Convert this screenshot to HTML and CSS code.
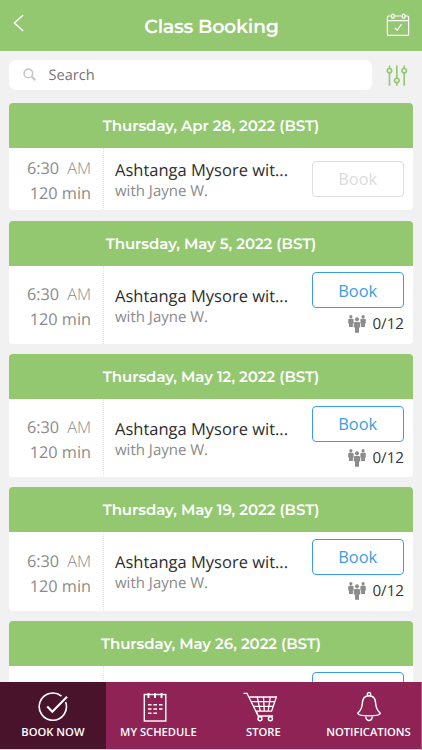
FILE: index.html
```html
<!DOCTYPE html>
<html lang="en">
<head>
<meta charset="utf-8">
<title>Class Booking</title>
<link rel="stylesheet" href="styles.css">
</head>
<body>
<svg class="defs" width="0" height="0" aria-hidden="true">
  <symbol id="people" viewBox="0 0 18 18">
    <g fill="#8c8c8c">
      <circle cx="2.9" cy="1.7" r="1.6"/><path d="M.2 4.2Q2.9 2.8 5.6 4.2V8.4H4.9V12H1V8.4H.2Z"/>
      <circle cx="15.1" cy="1.7" r="1.6"/><path d="M12.4 4.2Q15.1 2.8 17.8 4.2V8.4H17V12H13.1V8.4H12.4Z"/>
      <circle cx="9" cy="4.3" r="2"/><path d="M5.8 7.6Q9 5.8 12.2 7.6V12.4H11V17.7H7V12.4H5.8Z"/>
    </g>
  </symbol>
</svg>
<div class="app">
  <header class="topbar">
    <svg class="back" width="12" height="18" viewBox="0 0 12 18"><path d="M10.2 1L1.4 9L10.2 17"/></svg>
    <h1>Class Booking</h1>
    <svg class="cal" width="24" height="24" viewBox="0 0 24 24"><rect x="1.4" y="3" width="21.2" height="19.4" rx="1"/><path d="M1.4 7.7H22.6M8.6 14.7L11.3 17.2L15.5 11.2"/><rect class="ring" x="5.6" y="1.2" width="2.6" height="4" rx="1.3"/><rect class="ring" x="16.4" y="1.2" width="2.6" height="4" rx="1.3"/></svg>
  </header>
  <div class="searchrow">
    <div class="search">
      <svg width="14" height="14" viewBox="0 0 14 14"><circle cx="5.4" cy="5.4" r="4.3"/><path d="M8.8 8.8L12.3 12.2" stroke-width="2.2"/></svg>
      <span>Search</span>
    </div>
    <svg class="filter" width="22" height="22" viewBox="0 0 22 22"><path d="M3.5.5V3.4M3.5 8V20.8M10.8.5V13M10.8 17.8V20.8M18.2.5V3.4M18.2 8V20.8"/><circle cx="3.5" cy="5.7" r="2.2"/><circle cx="10.8" cy="15.4" r="2.2"/><circle cx="18.2" cy="5.7" r="2.2"/></svg>
  </div>
  <main class="list">
    <section class="card closed">
      <h2>Thursday, Apr 28, 2022 (BST)</h2>
      <div class="row">
        <div class="time"><div>6:30<span>AM</span></div><div>120 min</div></div>
        <div class="info"><div class="name">Ashtanga Mysore wit...</div><div class="with">with Jayne W.</div></div>
        <div class="action"><button disabled>Book</button></div>
      </div>
    </section>
    <section class="card">
      <h2>Thursday, May 5, 2022 (BST)</h2>
      <div class="row">
        <div class="time"><div>6:30<span>AM</span></div><div>120 min</div></div>
        <div class="info"><div class="name">Ashtanga Mysore wit...</div><div class="with">with Jayne W.</div></div>
        <div class="action"><button>Book</button><div class="count"><svg width="18" height="18"><use href="#people"/></svg>0/12</div></div>
      </div>
    </section>
    <section class="card">
      <h2>Thursday, May 12, 2022 (BST)</h2>
      <div class="row">
        <div class="time"><div>6:30<span>AM</span></div><div>120 min</div></div>
        <div class="info"><div class="name">Ashtanga Mysore wit...</div><div class="with">with Jayne W.</div></div>
        <div class="action"><button>Book</button><div class="count"><svg width="18" height="18"><use href="#people"/></svg>0/12</div></div>
      </div>
    </section>
    <section class="card">
      <h2>Thursday, May 19, 2022 (BST)</h2>
      <div class="row">
        <div class="time"><div>6:30<span>AM</span></div><div>120 min</div></div>
        <div class="info"><div class="name">Ashtanga Mysore wit...</div><div class="with">with Jayne W.</div></div>
        <div class="action"><button>Book</button><div class="count"><svg width="18" height="18"><use href="#people"/></svg>0/12</div></div>
      </div>
    </section>
    <section class="card">
      <h2>Thursday, May 26, 2022 (BST)</h2>
      <div class="row">
        <div class="time"></div>
        <div class="info"></div>
        <div class="action"><button></button></div>
      </div>
    </section>
  </main>
  <nav class="tabs">
    <a class="tab active">
      <svg width="32" height="32" viewBox="0 0 32 32"><path d="M24.5 5.2A13.6 13.6 0 1 0 28.6 11" stroke-width="1.6"/><path d="M10.2 15.6L15.3 20.8L30 5.8" stroke-width="2.1"/></svg>
      <span>BOOK NOW</span>
    </a>
    <a class="tab">
      <svg class="schedule" width="32" height="32" viewBox="0 0 32 32"><rect x="5.3" y="3.5" width="21.5" height="26.5"/><path d="M9.5 2V7M16 2V7M22.5 2V7" stroke-width="1.9"/><path d="M9 13.8H12.5M14.4 13.8H18M20 13.8H23.5M9 18H12.5M14.4 18H18M20 18H23.5M9 22.2H12.5M14.4 22.2H18"/></svg>
      <span>MY SCHEDULE</span>
    </a>
    <a class="tab">
      <svg class="cart" width="34" height="32" viewBox="0 0 34 32"><path d="M.5 2.3H4L15.2 25H30M6.6 6H33.4L28.6 20.2H13M8.8 10.7H31.8M10.9 15.3H30.2M14.2 6L17.2 20M20.5 6L21.3 20M27.3 6L25.2 20M15.2 25L13.5 20" stroke-width="1.3"/><circle cx="17" cy="27.8" r="2"/><circle cx="27.4" cy="27.8" r="2"/></svg>
      <span>STORE</span>
    </a>
    <a class="tab">
      <svg class="bell" width="32" height="32" viewBox="0 0 32 32"><path d="M4.6 22.2C8 19.5 9 17 9.3 12.5C9.5 7.5 12 4.8 16 4.8S22.5 7.5 22.7 12.5C23 17 24 19.5 27.4 22.2C26.5 25.8 5.5 25.8 4.6 22.2Z"/><circle cx="16" cy="3.2" r="1.7"/><path d="M12.8 25.5Q13 29.5 16 29.5T19.2 25.5"/></svg>
      <span>NOTIFICATIONS</span>
    </a>
  </nav>
</div>
</body>
</html>
```
FILE: styles.css
```css
* { box-sizing: border-box; }
body { margin: 0; font-family: "Open Sans", sans-serif; background: #f1f1f1; text-rendering: geometricPrecision; }
svg { display: block; fill: none; flex: none; }
.defs { position: absolute; }
.app { width: 422px; height: 750px; display: flex; flex-direction: column; overflow: hidden; }
.topbar { height: 51px; flex: none; background: #93c770; display: flex; justify-content: space-between; align-items: flex-start; padding: 0 12px 0 13px; }
.topbar svg { stroke: #fff; stroke-width: 1.5; }
.back { margin-top: 14px; }
.cal { margin-top: 13px; }
.topbar .cal { stroke-width: 1.2; }
.ring { fill: #93c770; }
h1 { margin: 14px 0 0 12px; font: 600 19px/26px Montserrat, Inter, sans-serif; letter-spacing: -.3px; color: #fff; white-space: nowrap; }
.searchrow { height: 51.6px; flex: none; display: flex; padding: 9px 0 0 9px; }
.search { width: 363px; height: 30px; background: #fff; border-radius: 7px; display: flex; align-items: center; padding-left: 14px; color: #757575; font-size: 14.6px; }
.search svg { stroke: #c8c8c8; stroke-width: 1.6; margin-right: 11.5px; }
.filter { margin: 5px 0 0 14px; stroke: #93c770; stroke-width: 1.6; }
.list { flex: 1; min-height: 0; overflow: hidden; padding: 0 9px; display: flex; flex-direction: column; gap: 10.2px; }
.card { flex: none; background: #fff; border-radius: 4px; overflow: hidden; width: 404px; }
h2 { margin: 0; height: 45px; background: #93c770; color: #fff; text-align: center; font: 600 15px/46px Montserrat, Inter, sans-serif; letter-spacing: -.05px; white-space: nowrap; }
.row { height: 78.2px; display: flex; }
.closed .row { height: 62.8px; }
.time { width: 95px; border-right: 1px dotted #e4e4e4; padding: 16.5px 12px 0 0; text-align: right; font-size: 16.3px; line-height: 25px; color: #8a8a8a; }
.time span { font-weight: 300; margin-left: 8px; }
.info { width: 199.5px; padding: 19px 0 0 11px; white-space: nowrap; }
.closed .time { padding-top: 8.5px; }
.closed .info { padding-top: 11px; }
.name { font-size: 16.5px; line-height: 22px; color: #2c2c2c; }
.with { font-size: 15px; line-height: 21px; color: #8a8a8a; }
.action { width: 100.5px; padding: 6.6px 0 0 8px; }
.closed .action { padding-top: 13px; }
button { display: block; width: 92.5px; height: 36px; border: 1px solid #3b9de4; border-radius: 4px; background: #fff; color: #3b9de4; font: 16.4px/32px "Open Sans", sans-serif; padding: 1px 0 0; }
button:disabled { color: #dcdcdc; border-color: #dedede; }
.count { display: flex; justify-content: flex-end; gap: 6px; margin-top: 7px; font-size: 15.2px; line-height: 18px; color: #333; }
.tabs { height: 68px; flex: none; display: flex; background: #8f2355; border-bottom: 1px solid #eec9da; border-right: 1px solid #b25c85; }
.tab { width: 105.2px; display: flex; flex-direction: column; align-items: center; padding-top: 9px; color: #fff; font-size: 11.2px; font-weight: 600; line-height: 16px; white-space: nowrap; }
.tab.active { background: #4a132c; width: 106px; }
.tab svg { stroke: #fff; stroke-width: 1.4; margin-bottom: 2px; }
.tab .schedule { margin-right: 6px; }
.tab .cart { margin-right: 7px; }
.tab .bell { margin-left: 2px; }
```
